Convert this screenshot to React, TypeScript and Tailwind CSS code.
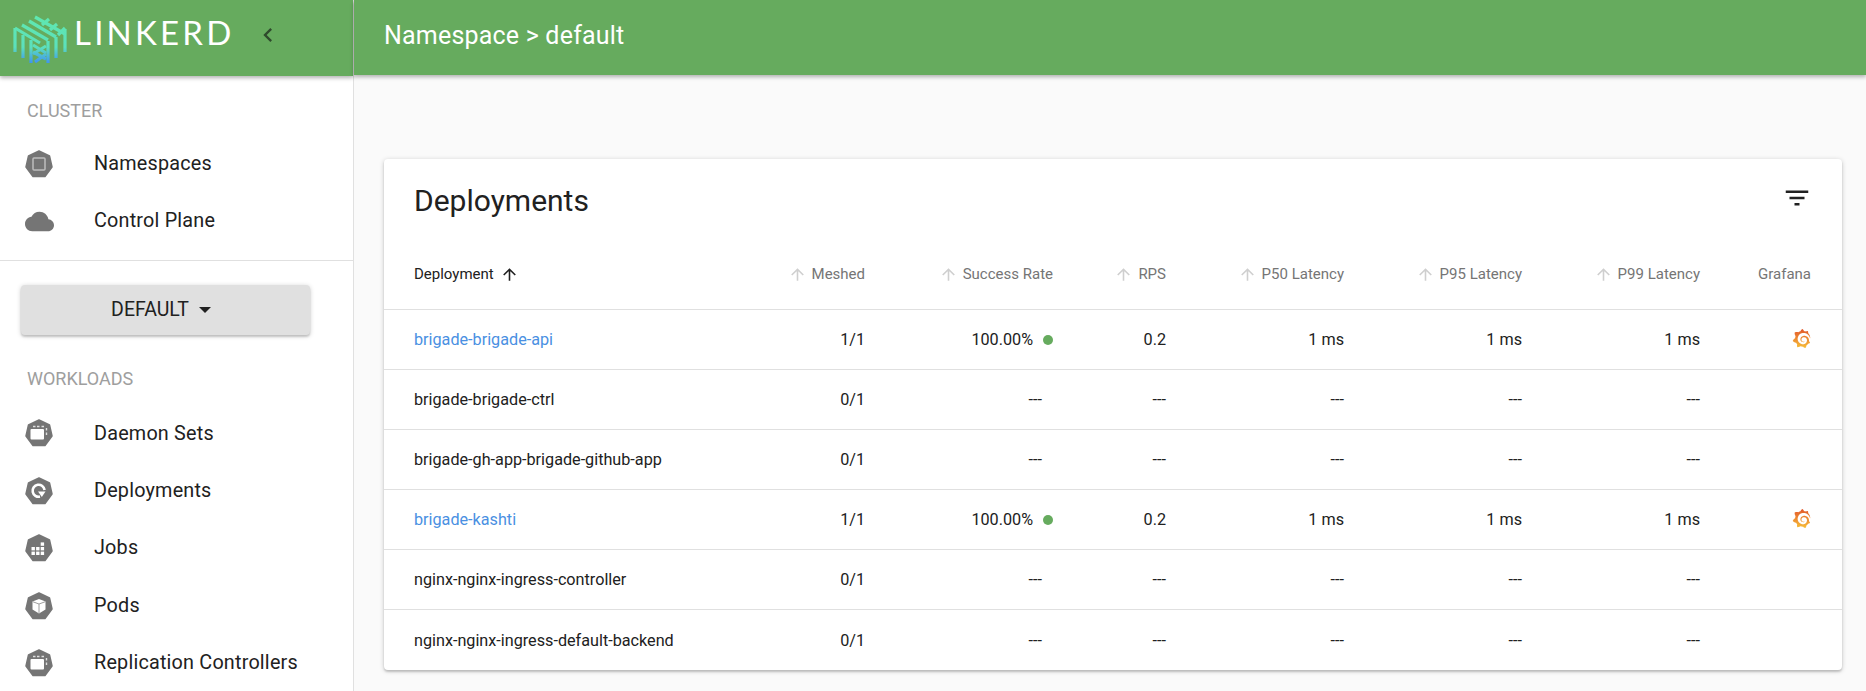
import { SiGrafana } from "react-icons/si";

const font = "font-['Roboto',sans-serif]";
const GRID = "grid grid-cols-[300px_151px_188px_113px_178px_178px_178px_111px] pl-[30px] pr-[31px]";

function Hept({ children }: { children?: React.ReactNode }) {
  return (
    <svg width="28" height="28" viewBox="0 0 28 28" className="shrink-0">
      <polygon points="14,1 24.5,6 27,17 20,26.5 8,26.5 1,17 3.5,6" fill="#757575" stroke="#757575" strokeWidth="1.5" strokeLinejoin="round" />
      {children}
    </svg>
  );
}

const Square = () => <Hept><rect x="8" y="8" width="12" height="12" rx="1" fill="none" stroke="#bdbdbd" strokeWidth="1.5" /></Hept>;
const Cloud = () => (
  <svg width="29" height="29" viewBox="0 0 24 24" className="shrink-0">
    <path fill="#757575" d="M19.35 10.04C18.67 6.59 15.64 4 12 4 9.11 4 6.6 5.64 5.35 8.04 2.34 8.36 0 10.91 0 14c0 3.31 2.69 6 6 6h13c2.76 0 5-2.24 5-5 0-2.64-2.05-4.78-4.65-4.96z" />
  </svg>
);
const Stack = () => (
  <Hept>
    <rect x="5.5" y="10" width="13.5" height="10.5" rx="1" fill="#fff" />
    <path d="M8 7.5h2.5M12 7.5h2.5M16.5 7.5h2.5M21.5 9v2.5M21.5 13.5v2.5" stroke="#e0e0e0" strokeWidth="1.4" fill="none" />
  </Hept>
);
const Refresh = () => (
  <Hept>
    <path d="M15 19.6A6 6 0 1 1 19.6 13" fill="none" stroke="#fff" strokeWidth="2.6" />
    <path d="M13 14.5h7.5l-3.7 5.5z" fill="#fff" />
  </Hept>
);
const Grid = () => (
  <Hept>
    <g fill="#fff">
      <rect x="6.5" y="13" width="3.4" height="3.4" />
      <rect x="11.1" y="13" width="3.4" height="3.4" />
      <rect x="15.7" y="13" width="3.4" height="3.4" />
      <rect x="6.5" y="17.6" width="3.4" height="3.4" />
      <rect x="11.1" y="17.6" width="3.4" height="3.4" />
      <rect x="15.7" y="17.6" width="3.4" height="3.4" />
      <rect x="15.7" y="8.4" width="3.4" height="3.4" />
    </g>
  </Hept>
);
const Cube = () => (
  <Hept>
    <path d="M14 7l6.5 2.5v8l-6.5 4-6.5-4v-8z" fill="#fff" />
    <path d="M8 9.8l6 2.2 6-2.2M14 12v9" fill="none" stroke="#9e9e9e" strokeWidth="1" />
  </Hept>
);

function Logo() {
  const lines = [
    "M35 9L65 26",
    "M29 13L56 29",
    "M22 17L48 32",
    "M15 20L40 35",
    "M42 17L49 11",
    "M50 22L57 16",
    "M58 27L65 20",
    "M15 20V44",
    "M23 27V50",
    "M31 32V55",
    "M65 21V44",
    "M56 29V50",
    "M48 33V55",
    "M33 37L46 45",
    "M33 44L46 51",
    "M46 38L33 46",
    "M46 46L35 54",
  ];
  return (
    <svg width="80" height="60" viewBox="0 0 80 60" className="shrink-0">
      <defs>
        <linearGradient id="lk" gradientUnits="userSpaceOnUse" x1="0" y1="8" x2="0" y2="56">
          <stop offset="0" stopColor="#5fe8b0" />
          <stop offset="0.65" stopColor="#5ce0bc" />
          <stop offset="1" stopColor="#3d8ff5" />
        </linearGradient>
      </defs>
      <g fill="none" stroke="url(#lk)" strokeWidth="3.2">
        {lines.map((d) => <path key={d} d={d} />)}
      </g>
    </svg>
  );
}

function Item({ icon, label }: { icon: React.ReactNode; label: string }) {
  return (
    <div className="flex h-[57.4px] shrink-0 items-center pl-[25px]">
      <div className="flex w-[69px] items-center">{icon}</div>
      <span className="text-[19.8px] tracking-[0.2px] text-[#212121]">{label}</span>
    </div>
  );
}

function Arrow({ dark }: { dark?: boolean }) {
  return (
    <svg width="19" height="19" viewBox="0 0 24 24" className="shrink-0">
      <path fill={dark ? "#212121" : "#cfcfcf"} d="M4 12l1.41 1.41L11 7.83V20h2V7.83l5.58 5.59L20 12l-8-8-8 8z" />
    </svg>
  );
}

function Head({ label }: { label: string }) {
  return (
    <div className="flex items-center justify-end gap-[5px] text-[#757575]">
      <Arrow />
      <span>{label}</span>
    </div>
  );
}

const rows: [string, boolean, string][] = [
  ["brigade-brigade-api", true, "1/1"],
  ["brigade-brigade-ctrl", false, "0/1"],
  ["brigade-gh-app-brigade-github-app", false, "0/1"],
  ["brigade-kashti", true, "1/1"],
  ["nginx-nginx-ingress-controller", false, "0/1"],
  ["nginx-nginx-ingress-default-backend", false, "0/1"],
];

export default function App() {
  return (
    <div className={`flex h-screen overflow-hidden bg-[#fafafa] ${font}`}>
      <svg width="0" height="0" className="absolute">
        <defs>
          <linearGradient id="gf" x1="0" y1="0" x2="0" y2="1">
            <stop offset="0" stopColor="#e2562a" />
            <stop offset="1" stopColor="#f7bf3a" />
          </linearGradient>
        </defs>
      </svg>
      <aside className="flex w-[354px] shrink-0 flex-col border-r border-[#e0e0e0] bg-white">
        <div className="flex h-[76px] shrink-0 items-center bg-[#66ab5e] shadow-[0_2px_4px_rgba(0,0,0,0.3)]">
          <Logo />
          <span className="ml-[-6px] mt-[-10px] font-['Lato',sans-serif] text-[33px] tracking-[3.2px] text-white">LINKERD</span>
          <svg width="28" height="28" viewBox="0 0 24 24" className="ml-[20px] mt-[-7px]">
            <path fill="#2f4a2d" d="M15.41 7.41L14 6l-6 6 6 6 1.41-1.41L10.83 12z" />
          </svg>
        </div>
        <div className="shrink-0 pl-[27px] pt-[25px] text-[18px] leading-[20px] text-[#9e9e9e]">CLUSTER</div>
        <div className="shrink-0 pt-[14px] pb-[10px]">
          <Item icon={<Square />} label="Namespaces" />
          <Item icon={<Cloud />} label="Control Plane" />
        </div>
        <div className="h-px shrink-0 bg-[#e0e0e0]" />
        <button className="ml-[21px] mt-[24px] flex h-[50px] w-[289px] shrink-0 items-center justify-center gap-[10px] rounded-[4px] bg-[#e0e0e0] pr-[9px] text-[19.5px] text-[#212121] shadow-[0_1px_5px_rgba(0,0,0,0.2),0_2px_2px_rgba(0,0,0,0.14)]">
          DEFAULT
          <span className="h-0 w-0 border-x-[6px] border-t-[6px] border-x-transparent border-t-[#212121]" />
        </button>
        <div className="shrink-0 pl-[27px] pt-[34px] text-[18px] leading-[20px] text-[#9e9e9e]">WORKLOADS</div>
        <div className="shrink-0 pt-[16px]">
          <Item icon={<Stack />} label="Daemon Sets" />
          <Item icon={<Refresh />} label="Deployments" />
          <Item icon={<Grid />} label="Jobs" />
          <Item icon={<Cube />} label="Pods" />
          <Item icon={<Stack />} label="Replication Controllers" />
        </div>
      </aside>
      <main className="flex min-w-0 flex-1 flex-col">
        <div className="flex h-[75px] shrink-0 items-center bg-[#66ab5e] pb-[4px] pl-[30px] text-[25px] tracking-[0.2px] text-white shadow-[0_2px_4px_rgba(0,0,0,0.3)]">
          Namespace &gt; default
        </div>
        <div className="pl-[30px] pr-[24px] pt-[84px]">
          <div className="rounded-[4px] bg-white shadow-[0_1px_5px_rgba(0,0,0,0.2),0_2px_2px_rgba(0,0,0,0.14)]">
            <div className="flex h-[79px] items-center justify-between pl-[30px] pr-[30px]">
              <span className="mt-[3px] text-[30px] text-[#212121]">Deployments</span>
              <svg width="30" height="30" viewBox="0 0 24 24" className="mt-[-1px]">
                <path fill="#212121" d="M10 18h4v-2h-4v2zM3 6v2h18V6H3zm3 7h12v-2H6v2z" />
              </svg>
            </div>
            <div className={`${GRID} h-[72px] items-center border-b border-[#e0e0e0] pt-[2px] text-[15px]`}>
              <div className="flex items-center gap-[6px] text-[#212121]">
                <span>Deployment</span>
                <Arrow dark />
              </div>
              <Head label="Meshed" />
              <Head label="Success Rate" />
              <Head label="RPS" />
              <Head label="P50 Latency" />
              <Head label="P95 Latency" />
              <Head label="P99 Latency" />
              <div className="text-right text-[#757575]">Grafana</div>
            </div>
            {rows.map(([name, active, meshed], i) => (
              <div
                key={name}
                className={`${GRID} h-[60px] items-center pt-[2px] text-right text-[16.2px] text-[#212121] ${i < rows.length - 1 ? "border-b border-[#e0e0e0]" : ""}`}
              >
                <div className={`whitespace-nowrap text-left ${active ? "text-[#4a90e2]" : ""}`}>{name}</div>
                <div className="col-start-2">{meshed}</div>
                {active ? (
                  <div className="flex items-center justify-end gap-[10px]">
                    <span>100.00%</span>
                    <span className="h-[10px] w-[10px] rounded-full bg-[#66ab5e]" />
                  </div>
                ) : (
                  <div className="pr-[11px]">---</div>
                )}
                <div>{active ? "0.2" : "---"}</div>
                <div>{active ? "1 ms" : "---"}</div>
                <div>{active ? "1 ms" : "---"}</div>
                <div>{active ? "1 ms" : "---"}</div>
                <div className="flex justify-end">
                  {active && <SiGrafana size={19} fill="url(#gf)" className="-translate-y-[2px]" />}
                </div>
              </div>
            ))}
          </div>
        </div>
      </main>
    </div>
  );
}
